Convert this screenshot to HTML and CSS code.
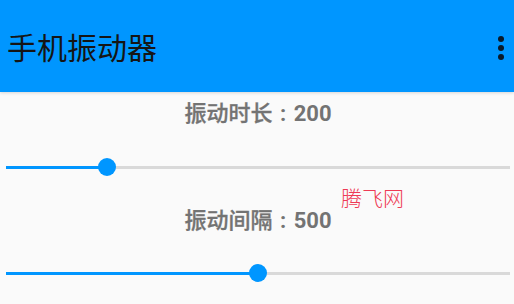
FILE: index.html
```html
<!DOCTYPE html>
<html lang="zh">
<head>
    <meta charset="UTF-8">
    <meta name="viewport" content="width=device-width, initial-scale=1.0">
    <title>手机振动器</title>
    <link rel="stylesheet" href="styles.css">
</head>
<body>
    <header class="app-bar">
        <h1 class="app-title">手机振动器</h1>
        <div class="overflow-menu">
            <span></span><span></span><span></span>
        </div>
    </header>

    <main class="settings">
        <div class="setting">
            <div class="setting-label"><span class="label-name">振动时长</span> : 200</div>
            <div class="slider">
                <div class="slider-active" style="width: 20%"></div>
                <div class="slider-thumb"></div>
                <div class="slider-rest"></div>
            </div>
        </div>

        <div class="setting">
            <div class="setting-label"><span class="label-name">振动间隔</span> : 500</div>
            <div class="slider">
                <div class="slider-active" style="width: 50%"></div>
                <div class="slider-thumb"></div>
                <div class="slider-rest"></div>
            </div>
        </div>

        <div class="watermark">腾飞网</div>
    </main>
</body>
</html>
```

FILE: styles.css
```css
/* Reset */
* {
    margin: 0;
    padding: 0;
    box-sizing: border-box;
}

body {
    font-family: Roboto, "Noto Sans CJK SC", sans-serif;
    background-color: #fafafa;
    width: 514px;
    height: 304px;
    overflow: hidden;
}

/* App bar */
.app-bar {
    height: 92px;
    background-color: #0096ff;
    display: flex;
    align-items: center;
    justify-content: space-between;
    padding: 6px 10px 0 7px;
    box-shadow: 0 1px 3px rgba(0, 0, 0, 0.15);
    position: relative;
}

.app-title {
    font-size: 30px;
    font-weight: normal;
    color: #151515;
    line-height: 36px;
}

.overflow-menu {
    display: flex;
    flex-direction: column;
    gap: 3px;
    margin-top: -3px;
}

.overflow-menu span {
    width: 6px;
    height: 6px;
    border-radius: 50%;
    background-color: #0a1a2a;
}

/* Settings */
.settings {
    position: relative;
    padding: 9px 4px 0 6px;
}

.setting-label {
    text-align: center;
    font-size: 22px;
    font-weight: bold;
    line-height: 26px;
    color: #737373;
    word-spacing: 2px;
}

.label-name {
    font-weight: 500;
    -webkit-text-stroke: 0.3px #737373;
}

.setting + .setting {
    margin-top: 31px;
}

.slider {
    display: flex;
    align-items: center;
    height: 20px;
    margin-top: 30px;
}

.setting + .setting .slider {
    margin-top: 29px;
}

.slider-active {
    height: 3px;
    background-color: #0096ff;
}

.slider-thumb {
    width: 18px;
    height: 18px;
    border-radius: 50%;
    background-color: #0096ff;
    margin: 0 -9px;
    position: relative;
}

.slider-rest {
    flex: 1;
    height: 3px;
    background-color: #d9d9d9;
}

/* Watermark */
.watermark {
    position: absolute;
    left: 341px;
    top: 95px;
    font-size: 21px;
    line-height: 24px;
    color: #ee3a55;
    font-weight: 300;
}
```
